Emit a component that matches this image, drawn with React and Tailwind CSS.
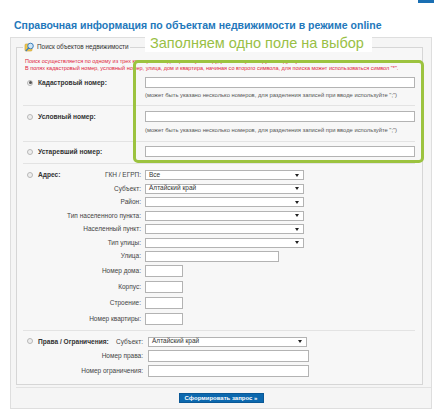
// Справочная информация — форма поиска объектов недвижимости
import React from 'react';

const Radio = ({ checked }) => (
  <span className="w-[6px] h-[6px] rounded-full border border-[#b8b8b8] bg-[#eeeeee] flex items-center justify-center shrink-0">
    {checked && <span className="w-[3px] h-[3px] rounded-full bg-[#555555]" />}
  </span>
);

const Arrow = () => (
  <svg width="4" height="3" viewBox="0 0 4 3">
    <path d="M0 0 L4 0 L2 3 Z" fill="#222" />
  </svg>
);

const Select = ({ value, w }) => (
  <div className={`h-[10px] border border-[#b3b3b3] bg-white flex items-center justify-between pl-[3px] pr-[4px] text-[6.5px] leading-none text-[#333333] ${w}`}>
    <span>{value}</span>
    <Arrow />
  </div>
);

const Input = ({ w, h }) => <div className={`border border-[#b3b3b3] bg-white ${w} ${h}`} />;

const SearchIcon = () => (
  <svg width="11" height="10" viewBox="0 0 11 10">
    <rect x="1" y="2" width="7" height="7" rx="1" fill="#f2c94c" stroke="#c99a2e" strokeWidth="0.6" />
    <circle cx="6.5" cy="4" r="2.8" fill="#cfe6f7" stroke="#3b7fc0" strokeWidth="1" />
    <path d="M4.6 6 L2.2 8.6" stroke="#3b7fc0" strokeWidth="1.4" strokeLinecap="round" />
  </svg>
);

const Separator = () => <div className="ml-[6px] w-[392px] h-px bg-[#e3e3e3]" />;

const hint = '(может быть указано несколько номеров, для разделения записей при вводе используйте ";")';

const addressSelects = [
  { label: 'ГКН / ЕГРП:', value: 'Все' },
  { label: 'Субъект:', value: 'Алтайский край' },
  { label: 'Район:', value: '' },
  { label: 'Тип населенного пункта:', value: '' },
  { label: 'Населенный пункт:', value: '' },
  { label: 'Тип улицы:', value: '' },
];

const addressInputs = [
  { label: 'Улица:', w: 'w-[134px]', h: 'h-[11px]', mt: 'mt-[3px]' },
  { label: 'Номер дома:', w: 'w-[38px]', h: 'h-[12px]', mt: 'mt-[3px]' },
  { label: 'Корпус:', w: 'w-[38px]', h: 'h-[12px]', mt: 'mt-[4px]' },
  { label: 'Строение:', w: 'w-[38px]', h: 'h-[12px]', mt: 'mt-[4px]' },
  { label: 'Номер квартиры:', w: 'w-[38px]', h: 'h-[12px]', mt: 'mt-[4px]' },
];

const NumberRow = ({ label, checked, mt }) => (
  <div className={`grid grid-cols-[128px_270px] ${mt}`}>
    <div className="flex items-center gap-[5px] pl-[10px]">
      <Radio checked={checked} />
      <span className="font-bold text-[6.6px] text-[#333333]">{label}</span>
    </div>
    <Input w="w-[270px]" h="h-[11px]" />
  </div>
);

const Hint = ({ mt }) => (
  <p className={`ml-[128px] leading-[8px] text-[5.8px] text-[#555555] ${mt}`}>{hint}</p>
);

export default function App() {
  return (
    <div className="relative w-[434px] h-[419px] overflow-hidden bg-white font-['Liberation_Sans',Arial,sans-serif]">
      {/* верхняя полоса */}
      <div className="h-[19px] flex justify-end">
        <div className="w-[16px] h-[3px] bg-[#1a6fb3]" />
      </div>

      <h1 className="pl-[14px] text-[10.5px] leading-[12px] font-bold text-[#2378bb]">
        Справочная информация по объектам недвижимости в режиме online
      </h1>

      {/* основной блок */}
      <div className="ml-[10px] mt-[6px] w-[422px] border border-[#dedede] bg-[#f5f5f5] pt-[4px] pl-[5px] pb-[5px]">
        <fieldset className="w-[407px] border border-[#d6d6d6] bg-[#f7f7f7] pb-[7px]">
          <legend className="ml-[6px] px-[1px] flex items-center gap-[2px] text-[6.4px] leading-[10px] text-[#333333]">
            <SearchIcon />
            <span>Поиск объектов недвижимости</span>
          </legend>

          <div className="mt-[6px] pl-[8px] text-[5.5px] leading-[7px] text-[#e0243a]">
            <p>Поиск осуществляется по одному из трех критериев: кадастровому номеру, условному номеру или адресу.</p>
            <p>В полях кадастровый номер, условный номер, улица, дом и квартира, начиная со второго символа, для поиска может использоваться символ "*".</p>
          </div>

          <NumberRow label="Кадастровый номер:" checked mt="mt-[5px]" />
          <Hint mt="mt-[3px]" />
          <div className="mt-[6px]"><Separator /></div>

          <NumberRow label="Условный номер:" mt="mt-[5px]" />
          <Hint mt="mt-[4px]" />
          <div className="mt-[7px]"><Separator /></div>

          <NumberRow label="Устаревший номер:" mt="mt-[4px]" />
          <div className="mt-[6px]"><Separator /></div>

          {/* Адрес */}
          <div className="mt-[6px] flex flex-col gap-[3.5px]">
            {addressSelects.map((row, i) => (
              <div key={i} className="grid grid-cols-[128px_auto]">
                <div className="flex items-center justify-between pl-[10px] pr-[4px]">
                  {i === 0 ? (
                    <span className="flex items-center gap-[5px]">
                      <Radio />
                      <span className="font-bold text-[6.6px] text-[#333333]">Адрес:</span>
                    </span>
                  ) : (
                    <span />
                  )}
                  <span className="text-[6.5px] text-[#444444]">{row.label}</span>
                </div>
                <Select value={row.value} w="w-[159px]" />
              </div>
            ))}
          </div>
          {addressInputs.map((row, i) => (
            <div key={i} className={`grid grid-cols-[128px_auto] ${row.mt}`}>
              <div className="flex items-center justify-end pr-[4px] text-[6.5px] text-[#444444]">{row.label}</div>
              <Input w={row.w} h={row.h} />
            </div>
          ))}
          <div className="mt-[5px]"><Separator /></div>

          {/* Права / Ограничения */}
          <div className="mt-[6px] grid grid-cols-[131px_auto]">
            <div className="flex items-center justify-between pl-[10px] pr-[5px]">
              <span className="flex items-center gap-[5px]">
                <Radio />
                <span className="font-bold text-[6.6px] text-[#333333]">Права / Ограничения:</span>
              </span>
              <span className="text-[6.5px] text-[#444444]">Субъект:</span>
            </div>
            <Select value="Алтайский край" w="w-[159px]" />
          </div>
          <div className="mt-[3px] grid grid-cols-[131px_auto]">
            <div className="flex items-center justify-end pr-[5px] text-[6.5px] text-[#444444]">Номер права:</div>
            <Input w="w-[161px]" h="h-[12px]" />
          </div>
          <div className="mt-[3px] grid grid-cols-[131px_auto]">
            <div className="flex items-center justify-end pr-[5px] text-[6.5px] text-[#444444]">Номер ограничения:</div>
            <Input w="w-[161px]" h="h-[12px]" />
          </div>
        </fieldset>

        <div className="mt-[2px] h-px bg-[#e2e2e2]" />

        <div className="mt-[5px] flex justify-center pr-[5px]">
          <button className="w-[85px] h-[10px] bg-[#0c68ae] border border-[#0a5896] text-white font-bold text-[6px] leading-none">
            Сформировать запрос »
          </button>
        </div>
      </div>

      {/* выделение поверх формы */}
      <div className="absolute left-[145px] top-[34px] w-[227px] h-[18px] bg-white pl-[5px] text-[14.5px] leading-[18px] text-[#99c045]">
        Заполняем одно поле на выбор
      </div>
      <div className="absolute left-[133px] top-[60px] w-[291px] h-[103px] border-[3px] border-[#9cc33f] rounded-[5px]" />
    </div>
  );
}
